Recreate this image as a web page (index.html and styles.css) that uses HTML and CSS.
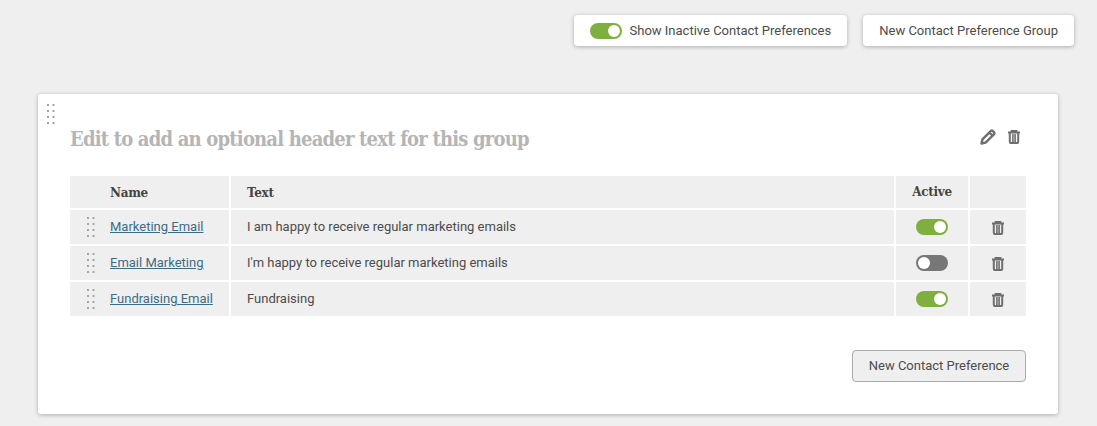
FILE: index.html
```html
<!DOCTYPE html>
<html lang="en">
<head>
<meta charset="utf-8">
<title>Contact Preferences</title>
<link rel="stylesheet" href="styles.css">
</head>
<body>
<svg class="defs" width="0" height="0" aria-hidden="true">
  <symbol id="trash" viewBox="0 0 14 14">
    <path d="M1 2.600h12M4.600 2.600V1h4.800v1.600" fill="none" stroke="currentColor" stroke-width="2"/>
    <path d="M2.800 2.600v9.100q0 1.400 1.400 1.400h5.600q1.400 0 1.400-1.400V2.600" fill="none" stroke="currentColor" stroke-width="2"/>
    <path d="M5.900 4v8M8.100 4v8" fill="none" stroke="currentColor" stroke-width="1.600"/>
  </symbol>
  <symbol id="grip" viewBox="0 0 8 22">
    <g fill="currentColor">
      <rect x="0" y="0" width="2" height="2"/><rect x="5.500" y="0" width="2" height="2"/>
      <rect x="0" y="6" width="2" height="2"/><rect x="5.500" y="6" width="2" height="2"/>
      <rect x="0" y="12" width="2" height="2"/><rect x="5.500" y="12" width="2" height="2"/>
      <rect x="0" y="18" width="2" height="2"/><rect x="5.500" y="18" width="2" height="2"/>
    </g>
  </symbol>
</svg>
<header class="toolbar">
  <button class="raised show-inactive" type="button"><span class="switch on"></span>Show Inactive Contact Preferences</button>
  <button class="raised" type="button">New Contact Preference Group</button>
</header>
<section class="card">
  <svg class="grip card-grip"><use href="#grip"/></svg>
  <div class="card-head">
    <h2>Edit to add an optional header text for this group</h2>
    <div class="head-icons">
      <svg class="icon pencil" viewBox="0 0 16 16"><path d="M1.500 14.500l.9-4.100L10.700 2.100q1.100-1.100 2.200 0l1 1q1.100 1.100 0 2.200L5.600 13.600zM9.300 3.500l3.200 3.200" fill="none" stroke="currentColor" stroke-width="2.400" stroke-linejoin="round"/></svg>
      <svg class="icon"><use href="#trash"/></svg>
    </div>
  </div>
  <div class="grid">
    <div class="cell th name-cell">Name</div>
    <div class="cell th">Text</div>
    <div class="cell th center">Active</div>
    <div class="cell th"></div>

    <div class="cell name-cell"><svg class="grip"><use href="#grip"/></svg><a href="#">Marketing Email</a></div>
    <div class="cell">I am happy to receive regular marketing emails</div>
    <div class="cell center"><span class="switch on"></span></div>
    <div class="cell center"><svg class="icon row-icon"><use href="#trash"/></svg></div>

    <div class="cell name-cell"><svg class="grip"><use href="#grip"/></svg><a href="#">Email Marketing</a></div>
    <div class="cell">I'm happy to receive regular marketing emails</div>
    <div class="cell center"><span class="switch"></span></div>
    <div class="cell center"><svg class="icon row-icon"><use href="#trash"/></svg></div>

    <div class="cell name-cell"><svg class="grip"><use href="#grip"/></svg><a href="#">Fundraising Email</a></div>
    <div class="cell">Fundraising</div>
    <div class="cell center"><span class="switch on"></span></div>
    <div class="cell center"><svg class="icon row-icon"><use href="#trash"/></svg></div>
  </div>
  <div class="card-foot">
    <button class="plain" type="button">New Contact Preference</button>
  </div>
</section>
</body>
</html>
```

FILE: styles.css
```css
* { box-sizing: border-box; }
html, body { margin: 0; height: 426px; overflow: hidden; }
body {
  background: #efefef;
  color: #4c4c4c;
  font: 13px/16px Roboto, "Liberation Sans", sans-serif;
  padding: 15px 23px 0 38px;
}
.defs { position: absolute; }
.toolbar { display: flex; justify-content: flex-end; gap: 16px; height: 31px; }
button { font: inherit; color: inherit; cursor: pointer; }
.raised {
  display: flex; align-items: center; height: 31px; padding: 0 16px;
  background: #fff; border: 0; border-radius: 4px;
  box-shadow: 0 1px 4px rgba(0,0,0,.28);
}
.show-inactive { padding-right: 16px; gap: 8px; }
.switch {
  position: relative; display: inline-block; width: 32px; height: 16px;
  border-radius: 8px; background: #777777;
}
.switch::after {
  content: ""; position: absolute; top: 2px; left: 2px;
  width: 12px; height: 12px; border-radius: 50%; background: #fff;
}
.switch.on { background: #7fb03f; }
.switch.on::after { left: 18px; }
.card {
  position: relative; width: 1020px; height: 320px; margin-top: 48px;
  padding: 0 32px; background: #fff; border-radius: 3px;
  box-shadow: 0 1px 4px rgba(0,0,0,.28);
}
.grip { width: 8px; height: 22px; color: #a3a3a3; flex: none; }
.name-cell .grip { margin-top: 2px; }
.card-grip { position: absolute; left: 9px; top: 10px; }
.card-head {
  display: flex; justify-content: space-between; align-items: center;
  height: 82px; padding: 8px 5px 0 0;
}
h2 {
  margin: 0; color: #b5b5b5; font: bold 20px/28px "DejaVu Serif", serif;
  font-stretch: condensed; letter-spacing: -.8px;
}
.head-icons { display: flex; gap: 11px; align-items: center; margin-top: -4px; }
.icon { width: 14px; height: 14px; color: #6f6f6f; display: block; }
.row-icon { margin-top: 1px; }
.pencil { width: 16px; height: 16px; }
.grid {
  display: grid; grid-template-columns: 159px 663px 72px 56px;
  grid-template-rows: 32px 34px 34px 34px; gap: 2px;
}
.cell { display: flex; align-items: center; padding: 0 16px; background: #efefef; min-width: 0; white-space: nowrap; }
.name-cell { padding-left: 17px; gap: 15px; }
.th.name-cell { padding-left: 40px; }
.th { font: bold 12px/18px "DejaVu Serif", serif; color: #444; letter-spacing: -.3px; padding-top: 1px; }
.center { justify-content: center; padding: 0; }
a { color: #3f6b85; text-decoration: underline; }
.card-foot { display: flex; justify-content: flex-end; margin-top: 34px; }
.plain {
  width: 174px; height: 32px; padding: 0; background: #efefef;
  border: 1px solid #aaaaaa; border-radius: 4px;
}
```
